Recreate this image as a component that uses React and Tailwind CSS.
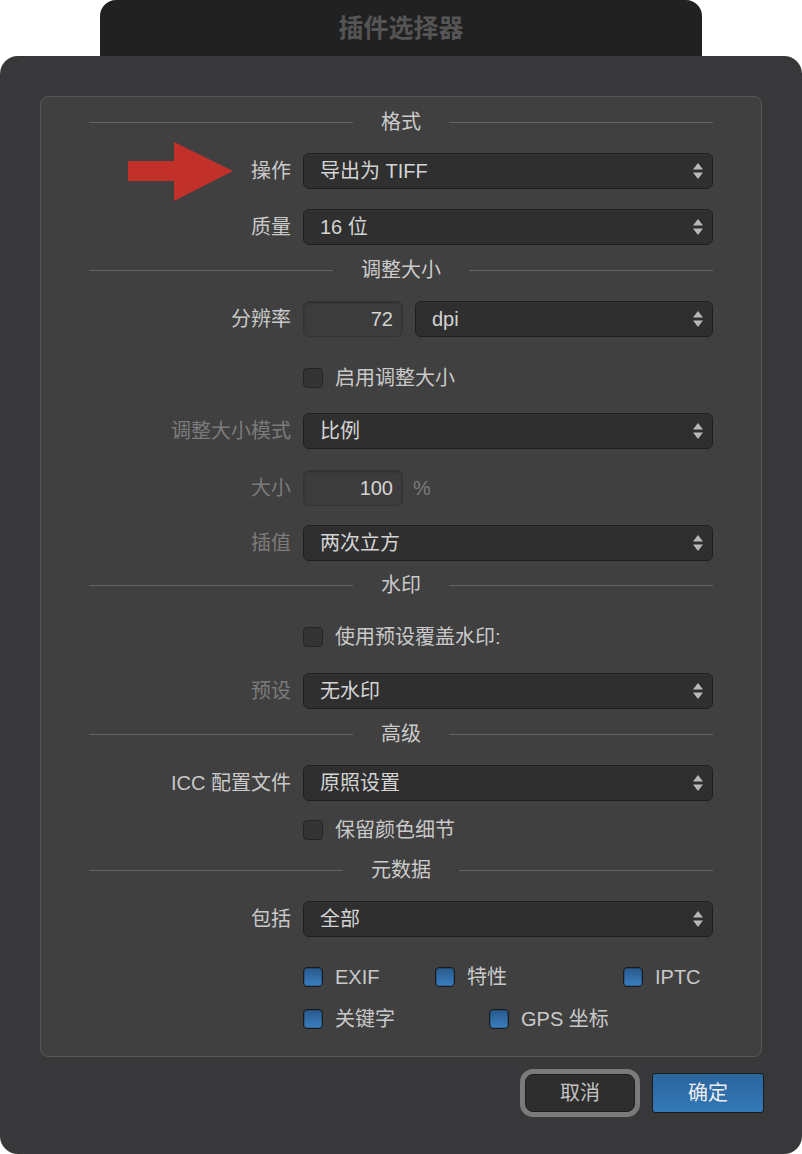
import clsx from 'clsx'

const FONT = '"Liberation Sans", "Noto Sans CJK SC", sans-serif'

function Arrows() {
  return (
    <svg width="10" height="16" viewBox="0 0 10 16" className="shrink-0">
      <polygon points="5,0 10,6.5 0,6.5" fill="#b8b8b8" />
      <polygon points="0,9.5 10,9.5 5,16" fill="#b8b8b8" />
    </svg>
  )
}

function Select({ value, className }) {
  return (
    <div
      className={clsx(
        'flex h-[36px] flex-1 items-center justify-between rounded-[6px] border border-[#1d1d1d] bg-[#2f2f2f] pl-[16px] pr-[9px] text-[#d4d4d4] shadow-[inset_0_1px_0_rgba(255,255,255,0.03)]',
        className
      )}
    >
      <span>{value}</span>
      <Arrows />
    </div>
  )
}

function NumberBox({ value }) {
  return (
    <div className="flex h-[36px] w-[100px] items-center justify-end rounded-[6px] border border-[#343434] bg-[#3c3c3c] pr-[9px] text-[#d4d4d4] shadow-[inset_0_1px_2px_rgba(0,0,0,0.25)]">
      {value}
    </div>
  )
}

function Row({ label, dim, children, className }) {
  return (
    <div className={clsx('flex items-center', className)}>
      <div className={clsx('w-[214px] shrink-0 pr-[12px] text-right', dim ? 'text-[#7b7b7b]' : 'text-[#c9c9c9]')}>
        {label}
      </div>
      <div className="flex flex-1 items-center">{children}</div>
    </div>
  )
}

function Heading({ title, className }) {
  return (
    <div className={clsx('flex h-[24px] items-center', className)}>
      <div className="h-px flex-1 bg-[#646464]" />
      <span className="px-[28px] text-[#cbcbcb]">{title}</span>
      <div className="h-px flex-1 bg-[#646464]" />
    </div>
  )
}

function Check({ label, checked, className }) {
  return (
    <div className={clsx('flex h-[24px] items-center', className)}>
      <div
        className={clsx(
          'h-[20px] w-[20px] shrink-0 rounded-[4px] border',
          checked
            ? 'border-[#1b1b1b] bg-linear-to-b from-[#285a8c] to-[#3b7fc1] shadow-[inset_0_0_0_1px_rgba(0,0,0,0.2)]'
            : 'border-[#242424] bg-[#343434]'
        )}
      />
      <span className="ml-[12px] text-[#c9c9c9]">{label}</span>
    </div>
  )
}

export default function App() {
  return (
    <div className="flex h-[1154px] w-[802px] flex-col bg-white text-[20px] leading-none" style={{ fontFamily: FONT }}>
      <div className="mx-[100px] flex h-[56px] items-center justify-center rounded-t-[16px] bg-[#212121]">
        <span className="text-[25px] font-bold text-[#555555]">插件选择器</span>
      </div>

      <div className="relative flex flex-1 flex-col rounded-[18px] bg-[#38383a] px-[40px] pt-[40px]">
        <div className="flex h-[961px] flex-col rounded-[8px] border border-[#575757] bg-[#404040] px-[48px] pt-[13px]">
          <Heading title="格式" />
          <Row label="操作" className="mt-[19px]">
            <Select value="导出为 TIFF" />
          </Row>
          <Row label="质量" className="mt-[20px]">
            <Select value="16 位" />
          </Row>

          <Heading title="调整大小" className="mt-[13px]" />
          <Row label="分辨率" className="mt-[19px]">
            <NumberBox value="72" />
            <Select value="dpi" className="ml-[12px]" />
          </Row>
          <Row label="" className="mt-[29px]">
            <Check label="启用调整大小" />
          </Row>
          <Row label="调整大小模式" dim className="mt-[23px]">
            <Select value="比例" />
          </Row>
          <Row label="大小" dim className="mt-[21px]">
            <NumberBox value="100" />
            <span className="ml-[10px] text-[#7b7b7b]">%</span>
          </Row>
          <Row label="插值" dim className="mt-[19px]">
            <Select value="两次立方" />
          </Row>

          <Heading title="水印" className="mt-[12px]" />
          <Row label="" className="mt-[28px]">
            <Check label="使用预设覆盖水印:" />
          </Row>
          <Row label="预设" dim className="mt-[24px]">
            <Select value="无水印" />
          </Row>

          <Heading title="高级" className="mt-[13px]" />
          <Row label="ICC 配置文件" className="mt-[19px]">
            <Select value="原照设置" />
          </Row>
          <Row label="" className="mt-[17px]">
            <Check label="保留颜色细节" />
          </Row>

          <Heading title="元数据" className="mt-[16px]" />
          <Row label="包括" className="mt-[19px]">
            <Select value="全部" />
          </Row>
          <Row label="" className="mt-[28px]">
            <Check label="EXIF" checked className="w-[132px]" />
            <Check label="特性" checked className="w-[188px]" />
            <Check label="IPTC" checked />
          </Row>
          <Row label="" className="mt-[18px]">
            <Check label="关键字" checked className="w-[186px]" />
            <Check label="GPS 坐标" checked />
          </Row>
        </div>

        <div className="mt-[12px] flex justify-end gap-[12px] pr-[-2px] mr-[-2px]">
          <div className="flex h-[48px] w-[120px] items-center justify-center rounded-[13px] bg-[#7a7a7a] p-[5px]">
            <div className="flex h-full w-full items-center justify-center rounded-[8px] border border-[#1e1e1e] bg-[#2e2e2e] text-[#c4c4c4]">
              取消
            </div>
          </div>
          <div className="mt-[4px] flex h-[40px] w-[112px] items-center justify-center rounded-[3px] border border-[#1c1c1c] bg-linear-to-b from-[#2a649c] to-[#3378b8] text-[#eeeeee]">
            确定
          </div>
        </div>

        <svg className="absolute left-[128px] top-[86px]" width="106" height="60" viewBox="0 0 106 60">
          <polygon points="0,19 46,19 46,0 105,29 46,59 46,39 0,39" fill="#c1312a" />
        </svg>
      </div>
    </div>
  )
}
